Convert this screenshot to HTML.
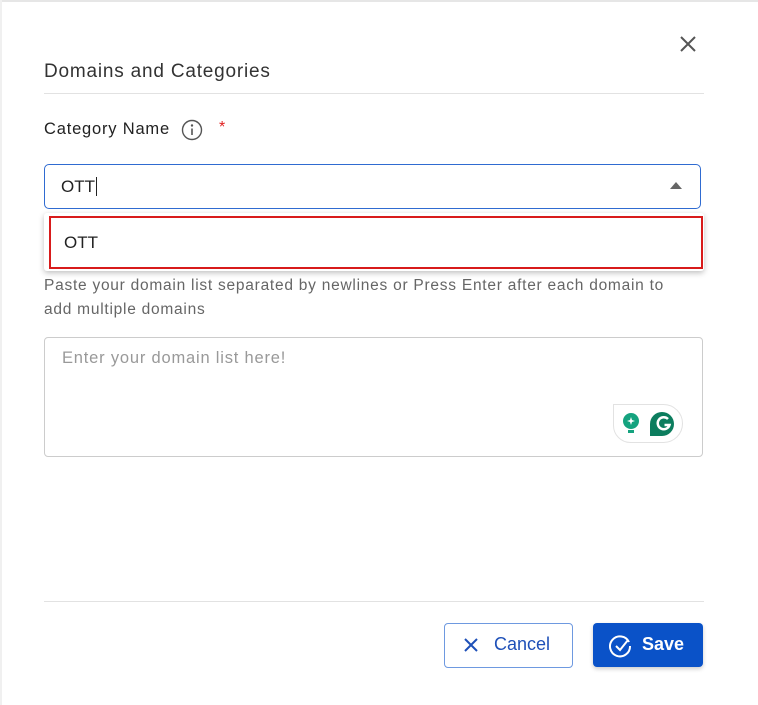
<!DOCTYPE html>
<html><head><style>
body{margin:0;width:758px;height:705px;background:#fff;font-family:"Liberation Sans",sans-serif;position:relative;overflow:hidden;color:#222}
.a{position:absolute}
</style></head><body>
<div class="a" style="left:0;top:0;width:758px;height:2px;background:#e6e6e6"></div>
<div class="a" style="left:0;top:0;width:2px;height:705px;background:#f0f0f0"></div>
<svg class="a" style="left:679px;top:35px" width="18" height="18"><path d="M2 2L16 16M16 2L2 16" stroke="#555" stroke-width="2"/></svg>
<div class="a" style="left:44px;top:61px;font-size:19px;letter-spacing:0.8px;color:#333">Domains and Categories</div>
<div class="a" style="left:44px;top:93px;width:660px;height:1px;background:#e2e2e2"></div>
<div class="a" style="left:44px;top:120px;font-size:16.5px;letter-spacing:0.8px;color:#222">Category Name</div>
<svg class="a" style="left:181px;top:119px" width="22" height="22"><circle cx="11" cy="11" r="9.5" fill="none" stroke="#555" stroke-width="1.4"/><circle cx="11" cy="6.5" r="1.2" fill="#555"/><path d="M11 9.5V16" stroke="#555" stroke-width="1.6"/></svg>
<div class="a" style="left:219px;top:119px;font-size:16px;color:#e02020">*</div>
<div class="a" style="left:44px;top:164px;width:655px;height:43px;border:1.5px solid #2f6bd1;border-radius:5px"></div>
<div class="a" style="left:61px;top:177px;font-size:17px;color:#222">OTT<span style="border-left:1px solid #222;margin-left:1px"></span></div>
<svg class="a" style="left:669px;top:181px" width="14" height="9"><path d="M1 8L7 1L13 8Z" fill="#666"/></svg>
<div class="a" style="left:44px;top:213px;width:660px;height:58px;background:#fff;box-shadow:0 2px 6px rgba(0,0,0,.25);border-radius:3px"></div>
<div class="a" style="left:49px;top:216px;width:650px;height:49px;border:2px solid #d81b1b"></div>
<div class="a" style="left:64px;top:233px;font-size:17px;color:#222">OTT</div>
<div class="a" style="left:44px;top:274px;width:645px;font-size:15.5px;letter-spacing:0.75px;color:#666;line-height:24px">Paste your domain list separated by newlines or Press Enter after each domain to add multiple domains</div>
<div class="a" style="left:44px;top:337px;width:657px;height:118px;border:1px solid #ccc;border-radius:4px"></div>
<div class="a" style="left:62px;top:349px;font-size:16.5px;letter-spacing:0.8px;color:#999">Enter your domain list here!</div>
<div class="a" style="left:613px;top:404px;width:68px;height:37px;border:1px solid #e2e2e2;border-radius:0 20px 20px 18px;background:#fff"></div>
<svg class="a" style="left:620px;top:410px" width="60" height="30"><circle cx="11" cy="11" r="8" fill="#15a37f"/><path d="M11 7L12 10L15 11L12 12L11 15L10 12L7 11L10 10Z" fill="#fff"/><rect x="8" y="20" width="6" height="3" fill="#15a37f"/><path d="M30 14a12 12 0 1 1 12 12H30Z" fill="#0c7d5e"/><path d="M48 9a6 6 0 1 0 1.5 6h-5" fill="none" stroke="#fff" stroke-width="2.5"/></svg>
<div class="a" style="left:44px;top:601px;width:660px;height:1px;background:#e2e2e2"></div>
<div class="a" style="left:444px;top:623px;width:127px;height:43px;border:1.5px solid #6e99e0;border-radius:4px"></div>
<svg class="a" style="left:463px;top:637px" width="16" height="16"><path d="M2 2L14 14M14 2L2 14" stroke="#1e50b8" stroke-width="2"/></svg>
<div class="a" style="left:494px;top:634px;font-size:18px;color:#1e50b8">Cancel</div>
<div class="a" style="left:593px;top:623px;width:110px;height:44px;background:#0a52c8;border-radius:4px;box-shadow:0 2px 4px rgba(0,0,0,.2)"></div>
<svg class="a" style="left:609px;top:634px" width="24" height="24"><path d="M20 8A10 10 0 1 0 21 12" fill="none" stroke="#fff" stroke-width="2"/><path d="M7 12L11 16L19 6" fill="none" stroke="#fff" stroke-width="2"/></svg>
<div class="a" style="left:642px;top:634px;font-size:18px;color:#fff;font-weight:bold">Save</div>
</body></html>
